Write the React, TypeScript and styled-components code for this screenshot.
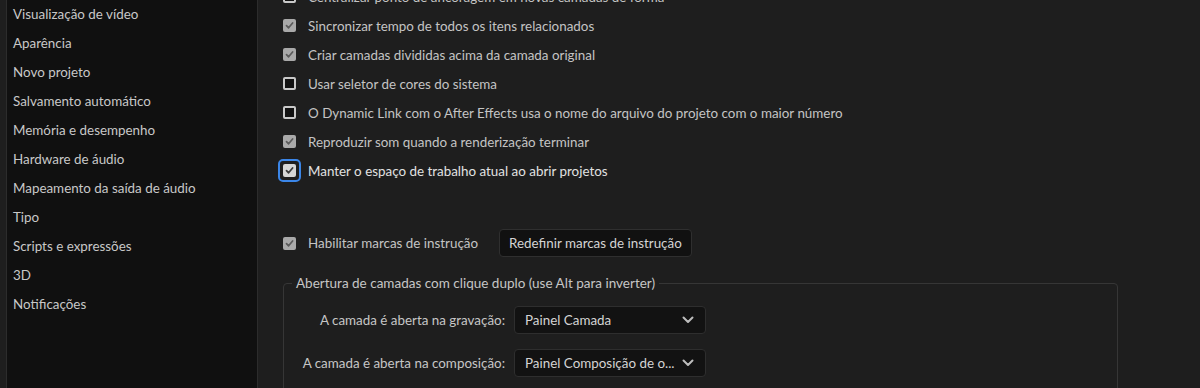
import * as React from 'react';
import styled, { createGlobalStyle } from 'styled-components';

const GlobalStyle = createGlobalStyle`
  html, body {
    margin: 0;
    padding: 0;
    background: #1e1e1e;
  }
  body {
    font-family: Lato, "Open Sans", sans-serif;
    font-size: 13.4px;
    color: #c6c6c6;
    -webkit-font-smoothing: antialiased;
  }
`;

const Page = styled.div`
  display: flex;
  height: 388px;
  overflow: hidden;
  background: #1e1e1e;
`;

const Sidebar = styled.nav`
  width: 250px;
  flex: none;
  margin-left: 6px;
  background: #101010;
  border-left: 1px solid #2c2c2c;
  border-right: 1px solid #2c2c2c;
  padding-top: 0;
`;

const NavItem = styled.div`
  height: 29px;
  line-height: 28px;
  padding-left: 6px;
  color: #c8c8c8;
  white-space: nowrap;
`;

const Main = styled.main`
  flex: 1;
  padding-left: 25px;
  min-width: 0;
`;

const Rows = styled.div`
  margin-top: -18px;
  display: flex;
  flex-direction: column;
`;

const CheckRow = styled.div<{ $bright?: boolean }>`
  height: 29px;
  display: flex;
  align-items: center;
  gap: 12px;
  color: ${p => (p.$bright ? '#e2e2e2' : '#c4c4c4')};
  white-space: nowrap;
`;

const Box = styled.span<{ $state: 'on' | 'off' | 'focus' }>`
  position: relative;
  width: 13px;
  height: 13px;
  flex: none;
  box-sizing: border-box;
  border-radius: 2px;
  display: flex;
  align-items: center;
  justify-content: center;
  background: ${p => (p.$state === 'off' ? '#111' : p.$state === 'focus' ? '#d6d6d6' : '#a9a9a9')};
  border: ${p => (p.$state === 'off' ? '2px solid #c9c9c9' : 'none')};
  ${p =>
    p.$state === 'focus' &&
    `
    &::after {
      content: '';
      position: absolute;
      inset: -5px;
      border: 2px solid #3b86e8;
      border-radius: 5px;
    }
  `}
`;

const Check = ({ color }: { color: string }) => (
  <svg width="9" height="9" viewBox="0 0 9 9">
    <polyline points="1.5,4.6 3.6,6.8 7.6,2" fill="none" stroke={color} strokeWidth="1.7" strokeLinecap="round" strokeLinejoin="round" />
  </svg>
);

const Checkbox = ({ state }: { state: 'on' | 'off' | 'focus' }) => (
  <Box $state={state}>{state !== 'off' && <Check color={state === 'focus' ? '#3a3a3a' : '#5a5a5a'} />}</Box>
);

const GuideRow = styled.div`
  margin-top: 44px;
  display: flex;
  align-items: center;
  height: 28px;
`;

const GuideLabel = styled(CheckRow)`
  height: 28px;
`;

const Button = styled.button`
  margin-left: 21px;
  height: 28px;
  padding: 0 9px;
  background: #111;
  border: 1px solid #2f2f2f;
  border-radius: 4px;
  color: #d4d4d4;
  font: inherit;
`;

const Group = styled.fieldset`
  margin: 17px 0 0;
  width: 835px;
  box-sizing: border-box;
  padding: 0 8px 0;
  border: 1px solid #363636;
  border-radius: 4px;
  min-width: 0;
`;

const Legend = styled.legend`
  padding: 0 4px;
  color: #c6c6c6;
  font-size: 13.5px;
  line-height: 18px;
`;

const Grid = styled.div`
  display: grid;
  grid-template-columns: 213px 192px;
  column-gap: 9px;
  row-gap: 15px;
  align-items: center;
  padding-top: 14px;
  padding-bottom: 20px;
`;

const FieldLabel = styled.label`
  text-align: right;
  white-space: nowrap;
  color: #c6c6c6;
`;

const Select = styled.div`
  height: 28px;
  box-sizing: border-box;
  background: #121212;
  border: 1px solid #2e2e2e;
  border-radius: 4px;
  display: flex;
  align-items: center;
  justify-content: space-between;
  padding: 0 11px 0 10px;
  color: #d4d4d4;
  white-space: nowrap;
`;

const Chevron = () => (
  <svg width="12" height="8" viewBox="0 0 12 8">
    <polyline points="1.5,1.5 6,6 10.5,1.5" fill="none" stroke="#bdbdbd" strokeWidth="2" strokeLinecap="round" strokeLinejoin="round" />
  </svg>
);

const navItems = [
  'Visualização de vídeo',
  'Aparência',
  'Novo projeto',
  'Salvamento automático',
  'Memória e desempenho',
  'Hardware de áudio',
  'Mapeamento da saída de áudio',
  'Tipo',
  'Scripts e expressões',
  '3D',
  'Notificações',
];

const options: { label: string; state: 'on' | 'off' | 'focus' }[] = [
  { label: 'Centralizar ponto de ancoragem em novas camadas de forma', state: 'off' },
  { label: 'Sincronizar tempo de todos os itens relacionados', state: 'on' },
  { label: 'Criar camadas divididas acima da camada original', state: 'on' },
  { label: 'Usar seletor de cores do sistema', state: 'off' },
  { label: 'O Dynamic Link com o After Effects usa o nome do arquivo do projeto com o maior número', state: 'off' },
  { label: 'Reproduzir som quando a renderização terminar', state: 'on' },
  { label: 'Manter o espaço de trabalho atual ao abrir projetos', state: 'focus' },
];

export default function App() {
  return (
    <>
      <GlobalStyle />
      <Page>
        <Sidebar>
          {navItems.map(item => (
            <NavItem key={item}>{item}</NavItem>
          ))}
        </Sidebar>
        <Main>
          <Rows>
            {options.map(o => (
              <CheckRow key={o.label} $bright={o.state === 'focus'}>
                <Checkbox state={o.state} />
                {o.label}
              </CheckRow>
            ))}
          </Rows>
          <GuideRow>
            <GuideLabel>
              <Checkbox state="on" />
              Habilitar marcas de instrução
            </GuideLabel>
            <Button>Redefinir marcas de instrução</Button>
          </GuideRow>
          <Group>
            <Legend>Abertura de camadas com clique duplo (use Alt para inverter)</Legend>
            <Grid>
              <FieldLabel>A camada é aberta na gravação:</FieldLabel>
              <Select>
                Painel Camada
                <Chevron />
              </Select>
              <FieldLabel>A camada é aberta na composição:</FieldLabel>
              <Select>
                Painel Composição de o...
                <Chevron />
              </Select>
            </Grid>
          </Group>
        </Main>
      </Page>
    </>
  );
}
